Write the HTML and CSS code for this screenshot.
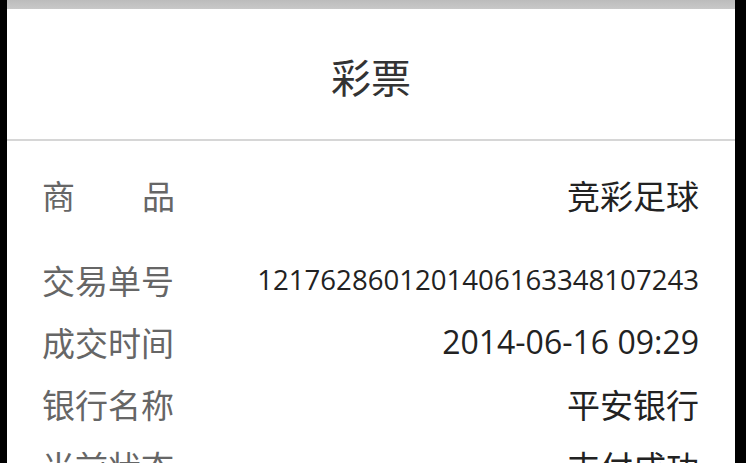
FILE: index.html
```html
<!DOCTYPE html>
<html lang="zh">
<head>
<meta charset="utf-8">
<link rel="stylesheet" href="styles.css">
</head>
<body>
<div class="panel">
  <div class="topbar"></div>
  <header class="header"><h1 class="title">彩票</h1></header>
  <div class="list">
    <div class="row first"><span class="label spread"><span>商</span><span>品</span></span><span class="value">竞彩足球</span></div>
    <div class="row"><span class="label">交易单号</span><span class="value num small">1217628601201406163348107243</span></div>
    <div class="row"><span class="label">成交时间</span><span class="value num">2014-06-16 09:29</span></div>
    <div class="row"><span class="label">银行名称</span><span class="value">平安银行</span></div>
    <div class="row"><span class="label">当前状态</span><span class="value">支付成功</span></div>
  </div>
</div>
</body>
</html>
```
FILE: styles.css
```css
html, body {
  margin: 0;
  padding: 0;
  background: #000;
  height: 100%;
  overflow: hidden;
}
body {
  font-family: "Noto Sans CJK SC", "Open Sans", sans-serif;
  padding: 0 11px 0 7px;
}
.panel {
  background: #fff;
  height: 100%;
}
.topbar {
  height: 9px;
  background: linear-gradient(#bcbcbc, #c8c8c8);
}
.header {
  height: 130px;
  display: flex;
  align-items: center;
  justify-content: center;
  border-bottom: 2px solid #d6d6d6;
}
.title {
  margin: 4px 0 0;
  font-size: 40px;
  font-weight: 400;
  color: #333;
  line-height: 1;
}
.list {
  padding: 23px 36px 0 35px;
}
.row {
  height: 62px;
  display: flex;
  align-items: center;
  justify-content: space-between;
}
.row.first {
  margin-bottom: 23px;
}
.label {
  font-size: 33px;
  color: #666;
  line-height: 1;
  width: 133px;
}
.spread {
  display: flex;
  justify-content: space-between;
}
.value {
  font-size: 33px;
  color: #222;
  line-height: 1;
}
.num {
  font-family: "Open Sans", sans-serif;
  font-size: 32px;
}
.num.small {
  font-size: 27.6px;
}
```
